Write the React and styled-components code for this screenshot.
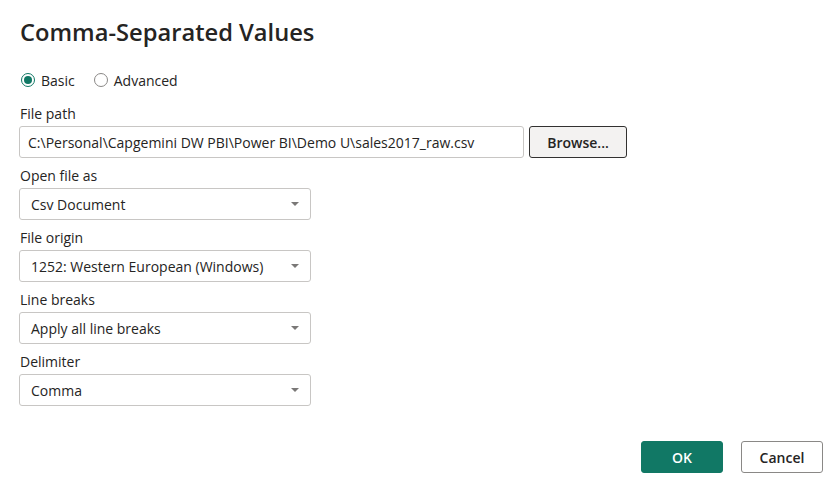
import React from 'react';
import styled, { createGlobalStyle } from 'styled-components';

const GlobalStyle = createGlobalStyle`
    body {
        margin: 0;
        background: #fff;
        font-family: "Segoe UI", "Open Sans", sans-serif;
        color: #252423;
    }
`;

const Dialog = styled.div`
    width: 835px;
    height: 491px;
    box-sizing: border-box;
    padding: 16px 12px 18px 19px;
    display: flex;
    flex-direction: column;
`;

const Title = styled.h1`
    font-size: 23.7px;
    font-weight: 600;
    line-height: 32px;
    margin: 0 0 0 1px;
    color: #252423;
`;

const RadioRow = styled.div`
    display: flex;
    align-items: center;
    gap: 19px;
    margin-top: 22px;
    margin-left: 2px;
    height: 20px;
`;

const RadioLabel = styled.label`
    display: flex;
    align-items: center;
    gap: 6px;
    font-size: 14px;
`;

const Circle = styled.span`
    width: 14px;
    height: 14px;
    box-sizing: border-box;
    border-radius: 50%;
    border: 1px solid ${p => (p.$checked ? '#117865' : '#8a8886')};
    display: flex;
    align-items: center;
    justify-content: center;

    &::after {
        content: '';
        width: 8px;
        height: 8px;
        border-radius: 50%;
        background: ${p => (p.$checked ? '#117865' : 'transparent')};
    }
`;

const Field = styled.div`
    display: flex;
    flex-direction: column;
    gap: 2px;
    margin-top: ${p => p.$top || 8}px;
`;

const Label = styled.div`
    font-size: 14px;
    line-height: 20px;
    margin-left: 1px;
`;

const Row = styled.div`
    display: flex;
    gap: 5px;
`;

const TextBox = styled.div`
    width: 505px;
    height: 32px;
    box-sizing: border-box;
    border: 1px solid #c8c6c4;
    border-radius: 3px;
    padding: 0 8px;
    display: flex;
    align-items: center;
    font-size: 14px;
    white-space: nowrap;
`;

const BrowseButton = styled.button`
    width: 98px;
    height: 32px;
    box-sizing: border-box;
    border: 1px solid #323130;
    border-radius: 3px;
    background: #f3f2f1;
    font-family: inherit;
    font-size: 14px;
    font-weight: 600;
    color: #252423;
`;

const Select = styled.div`
    width: 292px;
    height: 32px;
    box-sizing: border-box;
    border: 1px solid #c8c6c4;
    border-radius: 3px;
    padding: 0 11px 0 11px;
    display: flex;
    align-items: center;
    justify-content: space-between;
    font-size: 14px;
`;

const Caret = styled.span`
    width: 0;
    height: 0;
    border-left: 4px solid transparent;
    border-right: 4px solid transparent;
    border-top: 4px solid #7a7877;
`;

const Footer = styled.div`
    margin-top: auto;
    display: flex;
    justify-content: flex-end;
    gap: 18px;
`;

const Button = styled.button`
    width: 82px;
    height: 32px;
    box-sizing: border-box;
    border-radius: 3px;
    font-family: inherit;
    font-size: 14px;
    font-weight: 600;
    background: ${p => (p.$primary ? '#117865' : '#fff')};
    color: ${p => (p.$primary ? '#fff' : '#252423')};
    border: 1px solid ${p => (p.$primary ? '#117865' : '#8a8886')};
`;

const dropdowns = [
    { label: 'Open file as', value: 'Csv Document' },
    { label: 'File origin', value: '1252: Western European (Windows)' },
    { label: 'Line breaks', value: 'Apply all line breaks' },
    { label: 'Delimiter', value: 'Comma' },
];

const App = () => {
    return (
        <Dialog>
            <GlobalStyle />
            <Title>Comma-Separated Values</Title>
            <RadioRow>
                <RadioLabel><Circle $checked />Basic</RadioLabel>
                <RadioLabel><Circle />Advanced</RadioLabel>
            </RadioRow>
            <Field $top={14}>
                <Label>File path</Label>
                <Row>
                    <TextBox>C:\Personal\Capgemini DW PBI\Power BI\Demo U\sales2017_raw.csv</TextBox>
                    <BrowseButton>Browse...</BrowseButton>
                </Row>
            </Field>
            {dropdowns.map(d => (
                <Field key={d.label}>
                    <Label>{d.label}</Label>
                    <Select>
                        <span>{d.value}</span>
                        <Caret />
                    </Select>
                </Field>
            ))}
            <Footer>
                <Button $primary>OK</Button>
                <Button>Cancel</Button>
            </Footer>
        </Dialog>
    );
};

export default App;
